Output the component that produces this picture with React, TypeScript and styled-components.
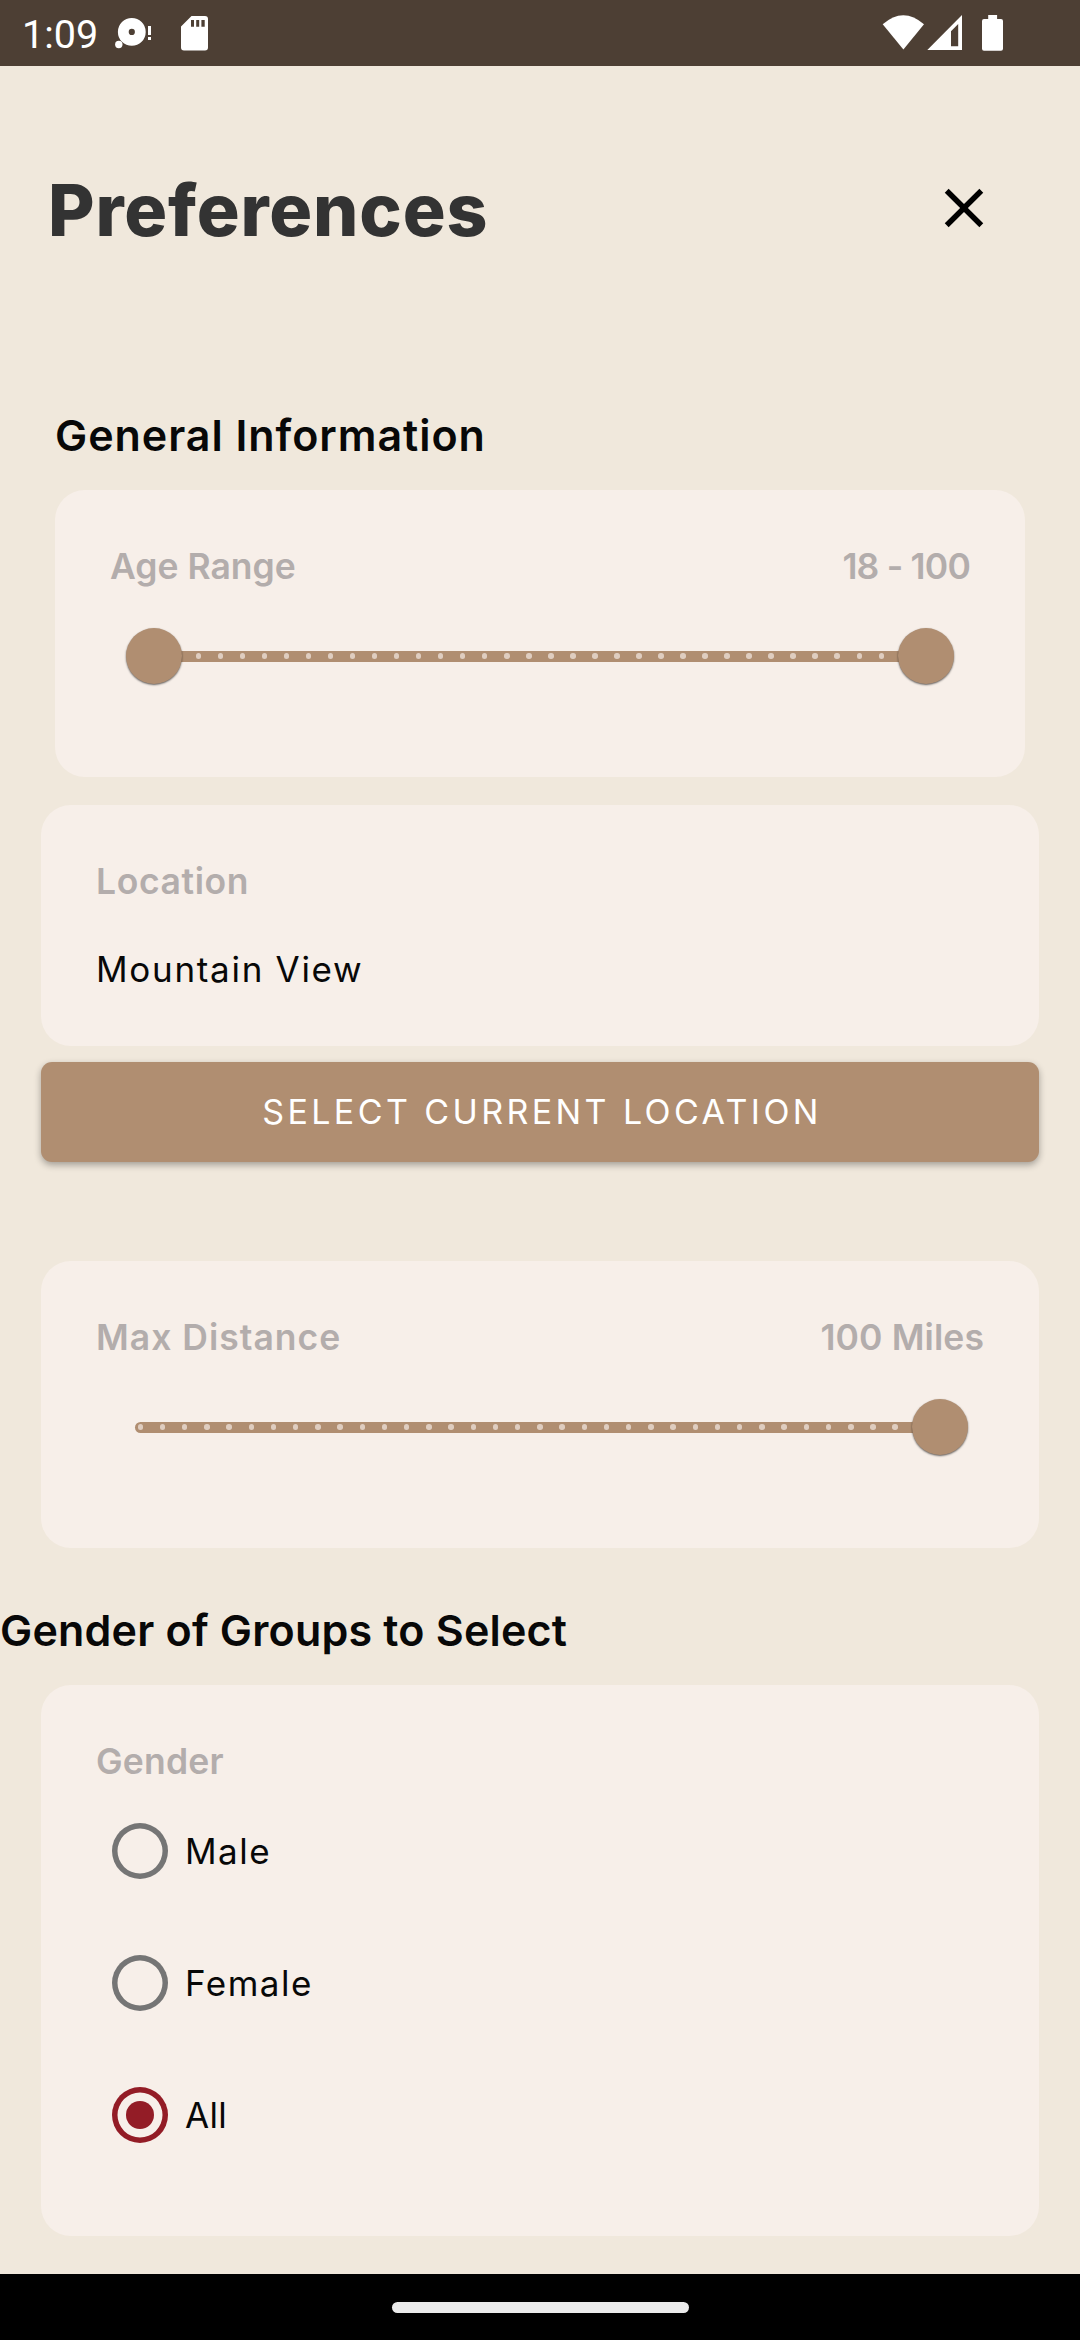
import React, { useState } from "react";
import styled, { createGlobalStyle } from "styled-components";

const color = {
  page: "#f0e8dc",
  card: "#f7efe9",
  accent: "#b08e71",
  tick: "#dfcdc0",
  status: "#4d3f34",
  label: "#b3adac",
  title: "#333333",
  ink: "#080808",
  selected: "#931c26",
  idle: "#757575",
};

const GlobalStyle = createGlobalStyle`
  * { box-sizing: border-box; }
  body { margin: 0; background: ${color.page}; }
  button { font: inherit; border: 0; padding: 0; background: none; }
`;

const Screen = styled.div`
  width: 1080px;
  height: 2340px;
  display: flex;
  flex-direction: column;
  overflow: hidden;
  background: ${color.page};
  font-family: Inter, Roboto, sans-serif;
`;

const StatusBar = styled.div`
  height: 66px;
  flex: none;
  display: flex;
  align-items: center;
  padding: 0 77px 0 22px;
  background: ${color.status};
  color: #fff;
`;

const Clock = styled.span`
  width: 90px;
  padding-top: 3px;
  font: 400 39.5px/46px Roboto, sans-serif;
  white-space: nowrap;
`;

const StatusIcon = styled.svg<{ $gap?: number }>`
  display: block;
  flex: none;
  margin-left: ${(p) => p.$gap ?? 0}px;
`;

const Spacer = styled.div`
  flex: 1;
`;

const Header = styled.header`
  height: 288px;
  flex: none;
  display: flex;
  align-items: center;
  justify-content: space-between;
  padding: 0 83px 0 48px;
`;

const Title = styled.h1`
  margin: 0;
  font-size: 71.5px;
  line-height: 90px;
  font-weight: 800;
  letter-spacing: 0.8px;
  color: ${color.title};
`;

const CloseButton = styled.button`
  width: 66px;
  height: 66px;
  margin-bottom: 4px;
`;

const Main = styled.main`
  flex: 1;
  display: flex;
  flex-direction: column;
`;

const SectionTitle = styled.h2<{ $indent: number; $top: number; $spacing: number }>`
  margin: ${(p) => p.$top}px 0 30px ${(p) => p.$indent}px;
  font-size: 43px;
  line-height: 50px;
  font-weight: 600;
  letter-spacing: ${(p) => p.$spacing}px;
  white-space: nowrap;
  color: ${color.ink};
`;

const Card = styled.section<{ $height: number; $inset?: number; $top?: number }>`
  height: ${(p) => p.$height}px;
  margin: ${(p) => p.$top ?? 0}px ${(p) => p.$inset ?? 41}px 0;
  padding: 55px;
  border-radius: 30px;
  background: ${color.card};
`;

const LabelRow = styled.div`
  display: flex;
  justify-content: space-between;
`;

const Label = styled.span<{ $spacing?: number }>`
  display: block;
  font-size: 35.5px;
  line-height: 44px;
  font-weight: 600;
  letter-spacing: ${(p) => p.$spacing ?? 0}px;
  white-space: nowrap;
  color: ${color.label};
`;

const Value = styled.span<{ $spacing?: number }>`
  display: block;
  font-size: 35px;
  line-height: 44px;
  font-weight: 400;
  letter-spacing: ${(p) => p.$spacing ?? 0}px;
  white-space: nowrap;
  color: ${color.ink};
`;

const LocationValue = styled(Value)`
  margin-top: 43px;
`;

const SliderBox = styled.div<{ $left: number; $right: number }>`
  position: relative;
  height: 56px;
  margin: 39px ${(p) => p.$right}px 0 ${(p) => p.$left}px;
  display: flex;
  align-items: center;
`;

const Track = styled.div`
  flex: 1;
  height: 11px;
  margin: 0 -5.5px;
  padding: 0 3px;
  display: flex;
  align-items: center;
  justify-content: space-between;
  border-radius: 6px;
  background: ${color.accent};
`;

const Tick = styled.i`
  width: 5.5px;
  height: 5.5px;
  border-radius: 50%;
  background: ${color.tick};
`;

const Thumb = styled.div<{ $end?: boolean }>`
  position: absolute;
  top: 0;
  ${(p) => (p.$end ? "right: -28px;" : "left: -28px;")}
  width: 56px;
  height: 56px;
  border-radius: 50%;
  background: ${color.accent};
  box-shadow: 0 1px 2px rgba(0, 0, 0, 0.6);
`;

const LocationButton = styled.button`
  display: block;
  height: 100px;
  margin: 16px 41px 0;
  padding-left: 4px;
  border-radius: 11px;
  background: ${color.accent};
  box-shadow: 0 3px 7px rgba(0, 0, 0, 0.32);
  color: #fff;
  font-size: 34px;
  line-height: 100px;
  font-weight: 400;
  letter-spacing: 3.4px;
  white-space: nowrap;
`;

const RadioList = styled.div`
  display: flex;
  flex-direction: column;
  margin: 1px 0 0 16px;
`;

const RadioRow = styled.div`
  height: 132px;
  display: flex;
  align-items: center;
  gap: 17px;
`;

const Radio = styled.span<{ $on: boolean }>`
  width: 56px;
  height: 56px;
  display: grid;
  place-items: center;
  box-shadow: inset 0 0 0 5.5px ${(p) => (p.$on ? color.selected : color.idle)};
  border-radius: 50%;
`;

const RadioDot = styled.span`
  width: 28px;
  height: 28px;
  border-radius: 50%;
  background: ${color.selected};
`;

const NavBar = styled.div`
  height: 66px;
  flex: none;
  display: flex;
  align-items: center;
  justify-content: center;
  background: #000;
`;

const NavPill = styled.div`
  width: 297px;
  height: 11px;
  border-radius: 6px;
  background: #ebebeb;
`;

function Ticks({ count }: { count: number }) {
  return (
    <Track>
      {Array.from({ length: count }, (_, i) => (
        <Tick key={i} />
      ))}
    </Track>
  );
}

const genders = [
  { name: "Male", spacing: 1.5 },
  { name: "Female", spacing: 1.5 },
  { name: "All", spacing: 0.3 },
];

export default function App() {
  const [gender, setGender] = useState("All");
  return (
    <Screen>
      <GlobalStyle />
      <StatusBar>
        <Clock>1:09</Clock>
        <StatusIcon $gap={2} width="40" height="66" viewBox="114 0 40 66" fill="#fff">
          <path
            fillRule="evenodd"
            d="M131.8 18a13.9 13.9 0 1 1 0 27.8a13.9 13.9 0 1 1 0-27.8zm0 10.8a3.1 3.1 0 1 0 0 6.2a3.1 3.1 0 1 0 0-6.2z"
          />
          <circle cx="118.8" cy="44.5" r="3.7" />
          <path d="M148 26h3v9h-3zM148 37h3v3h-3z" />
        </StatusIcon>
        <StatusIcon $gap={24} width="34" height="66" viewBox="178 0 34 66" fill="#fff">
          <path
            fillRule="evenodd"
            d="M191.500 16H205q3 0 3 3V47.500q0 3-3 3H184q-3 0-3-3V26.500zM191 20v6.700h3V20zM196.200 20v6.700h3V20zM201.400 20v6.700h3.300V20z"
          />
        </StatusIcon>
        <Spacer />
        <StatusIcon width="125" height="66" viewBox="878 0 125 66" fill="#fff">
          <path d="M882.700 24.300Q903.300 6.200 924 24.300L903.400 49.500z" />
          <path
            fillRule="evenodd"
            d="M962 15V50H927.300zM958.200 24L951 31.200V46.200H958.200z"
          />
          <path d="M988.200 15h8.900v4H1001q2 0 2 2V48.700q0 2-2 2H984q-2 0-2-2V21q0-2 2-2h4.200z" />
        </StatusIcon>
      </StatusBar>

      <Header>
        <Title>Preferences</Title>
        <CloseButton aria-label="Close">
          <svg width="66" height="66" viewBox="0 0 24 24" fill="#000">
            <path d="M19 6.410L17.590 5 12 10.590 6.410 5 5 6.410 10.590 12 5 17.590 6.410 19 12 13.410 17.590 19 19 17.590 13.410 12z" />
          </svg>
        </CloseButton>
      </Header>

      <Main>
        <SectionTitle $indent={55} $top={56} $spacing={0.95}>
          General Information
        </SectionTitle>
        <Card $height={287} $inset={55}>
          <LabelRow>
            <Label>Age Range</Label>
            <Label $spacing={-0.8}>18 - 100</Label>
          </LabelRow>
          <SliderBox $left={44} $right={44}>
            <Ticks count={36} />
            <Thumb />
            <Thumb $end />
          </SliderBox>
        </Card>

        <Card $height={241} $top={28}>
          <Label $spacing={0.6}>Location</Label>
          <LocationValue $spacing={1.7}>Mountain View</LocationValue>
        </Card>
        <LocationButton>SELECT CURRENT LOCATION</LocationButton>

        <Card $height={287} $top={99}>
          <LabelRow>
            <Label $spacing={1}>Max Distance</Label>
            <Label $spacing={0.1}>100 Miles</Label>
          </LabelRow>
          <SliderBox $left={44} $right={44}>
            <Ticks count={37} />
            <Thumb $end />
          </SliderBox>
        </Card>

        <SectionTitle $indent={0} $top={57} $spacing={0.2}>
          Gender of Groups to Select
        </SectionTitle>
        <Card $height={551}>
          <Label $spacing={0.2}>Gender</Label>
          <RadioList role="radiogroup">
            {genders.map((g) => (
              <RadioRow
                key={g.name}
                role="radio"
                aria-checked={gender === g.name}
                onClick={() => setGender(g.name)}
              >
                <Radio $on={gender === g.name}>{gender === g.name && <RadioDot />}</Radio>
                <Value $spacing={g.spacing}>{g.name}</Value>
              </RadioRow>
            ))}
          </RadioList>
        </Card>
      </Main>

      <NavBar>
        <NavPill />
      </NavBar>
    </Screen>
  );
}
